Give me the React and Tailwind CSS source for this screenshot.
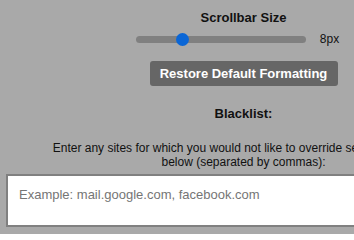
export default function App() {
  return (
    <div className="w-[354px] h-[234px] overflow-hidden bg-[#a9a9a9]" style={{ fontFamily: '"Liberation Sans", Arial, sans-serif' }}>
      <div className="w-[487px] pt-[10px] flex flex-col items-center text-center text-[#111]">
        <div className="text-[13px] font-bold leading-[15px]">Scrollbar Size</div>
        <div className="mt-[7px] flex items-center pr-[12px]">
          <div className="relative w-[170px] h-[7px] rounded-full bg-[#808080]">
            <div className="absolute left-[40px] top-[-3px] w-[13px] h-[13px] rounded-full bg-[#0a66d6]" />
          </div>
          <span className="ml-[14px] text-[12px] leading-[14px]">8px</span>
        </div>
        <button className="mt-[15px] w-[188px] h-[25px] rounded-[3px] bg-[#666666] text-white text-[13px] font-bold leading-[25px]">
          Restore Default Formatting
        </button>
        <div className="mt-[20px] text-[13px] font-bold leading-[15px]">Blacklist:</div>
        <div className="mt-[20px] text-[12px] leading-[14px] whitespace-nowrap">
          Enter any sites for which you would not like to override settings for them<br />below (separated by commas):
        </div>
        <textarea
          className="mt-[5px] ml-[6px] self-start w-[475px] h-[53px] border-2 border-[#808080] bg-white px-[11px] pt-[11px] pb-[4px] text-[13px] leading-[15px] resize-none outline-none placeholder:text-[#757575]"
          placeholder="Example: mail.google.com, facebook.com"
          style={{ fontFamily: '"Liberation Sans", Arial, sans-serif' }}
        />
      </div>
    </div>
  );
}
